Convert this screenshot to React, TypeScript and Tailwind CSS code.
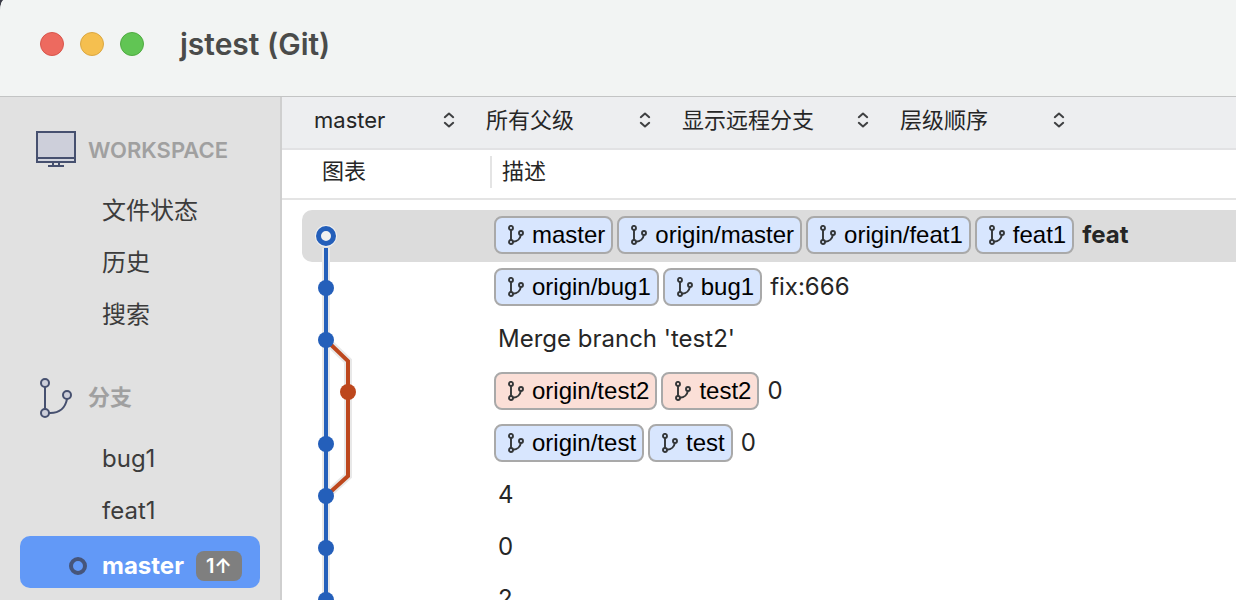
type Tone = "blue" | "red";

type Commit = {
  id: string;
  message: string;
  refs?: string[];
  tone?: Tone;
  selected?: boolean;
};

const commits: Commit[] = [
  {
    id: "c1",
    message: "feat",
    refs: ["master", "origin/master", "origin/feat1", "feat1"],
    selected: true,
  },
  { id: "c2", message: "fix:666", refs: ["origin/bug1", "bug1"] },
  { id: "c3", message: "Merge branch 'test2'" },
  { id: "c4", message: "0", refs: ["origin/test2", "test2"], tone: "red" },
  { id: "c5", message: "0", refs: ["origin/test", "test"] },
  { id: "c6", message: "4" },
  { id: "c7", message: "0" },
  { id: "c8", message: "2" },
];

const filters = [
  { label: "分支", value: "master", width: "w-[172px]" },
  { label: "父级", value: "所有父级", width: "w-[196px]" },
  { label: "远程", value: "显示远程分支", width: "w-[218px]" },
  { label: "排序", value: "层级顺序", width: "w-[196px]" },
];

const MonitorIcon = () => (
  <svg className="h-9 w-10" viewBox="0 0 40 36" fill="none" aria-hidden="true">
    <rect x="1" y="1" width="38" height="30" fill="#d3d6df" />
    <rect x="1" y="1" width="38" height="26" fill="#cdcfda" />
    <path
      d="M1 1h38v30H1zM1 27h38M17 31v3M23 31v3M12 35h16"
      stroke="#46506f"
      strokeWidth="2"
    />
  </svg>
);

const BranchesIcon = () => (
  <svg className="h-10 w-8" viewBox="0 0 32 40" aria-hidden="true">
    <g fill="#cdcfda" stroke="#46506f" strokeWidth="2">
      <path d="M5 9v22M27 21C25.500 29 20 35.500 9 35" fill="none" />
      <circle cx="5" cy="5" r="4" />
      <circle cx="27" cy="17" r="4" />
      <circle cx="5" cy="35" r="4" />
    </g>
  </svg>
);

const RefIcon = () => (
  <svg className="h-5 w-4" viewBox="0 0 16 20" fill="none" aria-hidden="true">
    <g stroke="#333638" strokeWidth="1.900">
      <path d="M3 5v10M12.800 10C12.300 13.500 9.500 16.700 5 16.800" />
      <circle cx="3" cy="2.900" r="2" />
      <circle cx="13" cy="8" r="2" />
      <circle cx="3" cy="17" r="2" />
    </g>
  </svg>
);

const UpDownIcon = () => (
  <svg
    className="pointer-events-none absolute top-[15px] right-[31px] h-4 w-3"
    viewBox="0 0 12 16"
    fill="none"
    aria-hidden="true"
  >
    <path
      d="M1.800 5.200 6 1.500l4.200 3.700M1.800 10.800l4.200 3.700 4.200-3.700"
      stroke="#3f4042"
      strokeWidth="2"
      strokeLinecap="round"
      strokeLinejoin="round"
    />
  </svg>
);

const RefBadge = ({ name, tone = "blue" }: { name: string; tone?: Tone }) => (
  <span
    className={`flex h-[38px] items-center gap-2 rounded-lg border-2 border-[#a9a9a9] pr-1.5 pl-3 font-['Liberation_Sans',sans-serif] text-black ${
      tone === "red" ? "bg-[#fbdfd7]" : "bg-[#d8e6fe]"
    }`}
  >
    <RefIcon />
    {name}
  </span>
);

const Graph = () => (
  <svg
    className="pointer-events-none absolute top-[60px] left-5 h-[416px] w-20"
    viewBox="0 0 80 416"
    fill="none"
    aria-hidden="true"
  >
    <path d="M24 38v378" stroke="#e8e8e8" strokeWidth="8" />
    <path d="M24 130l22 21v115l-22 20" stroke="#e8e8e8" strokeWidth="8" />
    <path d="M24 130l22 21v115l-22 20" stroke="#bd471d" strokeWidth="4" />
    <path d="M24 38v378" stroke="#245fba" strokeWidth="4" />
    <circle cx="24" cy="26" r="11" fill="#f0f0f0" />
    <circle cx="24" cy="26" r="7.500" stroke="#245fba" strokeWidth="5" />
    {[78, 130, 234, 286, 338, 390].map((y) => (
      <circle key={y} cx="24" cy={y} r="8" fill="#245fba" />
    ))}
    <circle cx="46" cy="182" r="8" fill="#bd471d" />
  </svg>
);

const SidebarItem = ({ name }: { name: string }) => (
  <li>
    <a href="#" className="flex h-[52px] items-center pt-0.5 pl-[82px]">
      {name}
    </a>
  </li>
);

const Sidebar = () => (
  <aside className="w-[282px] shrink-0 border-r-2 border-[#cfcfcf] bg-[#e1e1e1] px-5 pt-[19px] text-2xl text-[#3c3c3c]">
    <h2 className="flex h-[68px] items-center gap-3 pb-0.5 pl-4 text-[22px] font-semibold text-[#a0a0a0]">
      <MonitorIcon />
      <span className="pt-1">WORKSPACE</span>
    </h2>
    <ul>
      <SidebarItem name="文件状态" />
      <SidebarItem name="历史" />
      <SidebarItem name="搜索" />
    </ul>
    <h2 className="mt-6 flex h-[68px] items-center gap-4 pl-5 text-[22px] font-semibold text-[#a0a0a0]">
      <BranchesIcon />
      分支
    </h2>
    <ul>
      <SidebarItem name="bug1" />
      <SidebarItem name="feat1" />
      <li>
        <a
          href="#"
          className="flex h-[52px] items-center rounded-[10px] bg-[#6299f7] pt-2 pl-[49px] font-bold text-white"
        >
          <span className="mr-[15px] size-[18px] rounded-full border-4 border-[#46557a]" />
          master
          <span className="ml-3 flex h-[30px] items-center rounded-lg bg-[#7f7f7f] px-2.5 text-xl font-semibold">
            1↑
          </span>
        </a>
      </li>
    </ul>
  </aside>
);

const App = () => {
  return (
    <div className="h-screen overflow-hidden bg-[#3b3b46] font-['Inter','Noto_Sans_CJK_SC',sans-serif]">
      <div className="flex h-full flex-col overflow-hidden rounded-tl-[4px_12px] bg-white">
        <header className="flex h-[97px] shrink-0 items-center gap-4 border-b border-[#c3c4c4] bg-[#f2f4f3] pb-2 pl-10">
          <button
            aria-label="关闭"
            className="size-6 rounded-full border border-[#d8554b] bg-[#ed6a5f]"
          />
          <button
            aria-label="最小化"
            className="size-6 rounded-full border border-[#dba741] bg-[#f5bf4f]"
          />
          <button
            aria-label="缩放"
            className="size-6 rounded-full border border-[#50ab41] bg-[#61c554]"
          />
          <h1 className="ml-5 text-[30px] font-semibold text-[#4a4b4a]">
            jstest (Git)
          </h1>
        </header>
        <div className="flex min-h-0 flex-1">
          <Sidebar />
          <main className="min-w-0 flex-1 text-[#262626]">
            <div className="flex h-[53px] border-b-2 border-[#e2e2e4] bg-[#edeef0] pl-8 text-[22px]">
              {filters.map(({ label, value, width }) => (
                <div key={value} className={`relative shrink-0 ${width}`}>
                  <select
                    aria-label={label}
                    className="h-[46px] w-full appearance-none bg-transparent"
                  >
                    <option>{value}</option>
                  </select>
                  <UpDownIcon />
                </div>
              ))}
            </div>
            <div className="relative">
              <table className="w-full table-fixed text-left text-2xl">
                <thead className="text-[22px]">
                  <tr className="h-[49px] border-b-2 border-[#e4e4e4]">
                    <th className="w-[212px] p-0 pb-1 font-normal">
                      <div className="mr-0.5 flex h-8 items-center border-r-2 border-[#e4e4e4] pl-10">
                        图表
                      </div>
                    </th>
                    <th className="p-0 pb-1 pl-2 font-normal">描述</th>
                  </tr>
                </thead>
                <tbody className="before:block before:h-2.5">
                  {commits.map(({ id, message, refs = [], tone, selected }) => (
                    <tr key={id} className="h-[52px]">
                      <td className="p-0 pl-5">
                        <div
                          className={`h-[52px] ${selected ? "rounded-l-[10px] bg-[#dcdcdc]" : ""}`}
                        />
                      </td>
                      <td className={`p-0 ${selected ? "bg-[#dcdcdc]" : ""}`}>
                        <div className="flex h-[52px] items-center gap-1 pb-0.5 whitespace-nowrap">
                          {refs.map((name) => (
                            <RefBadge key={name} name={name} tone={tone} />
                          ))}
                          <span className={`px-1 ${selected ? "font-bold" : ""}`}>
                            {message}
                          </span>
                        </div>
                      </td>
                    </tr>
                  ))}
                </tbody>
              </table>
              <Graph />
            </div>
          </main>
        </div>
      </div>
    </div>
  );
};

export default App;
